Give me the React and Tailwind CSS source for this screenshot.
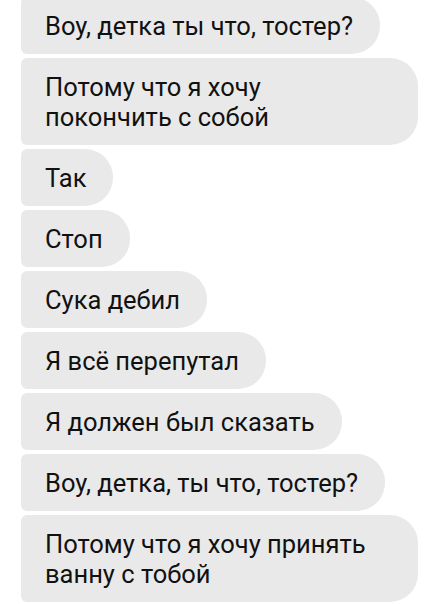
import React from 'react';

const messages = [
  { lines: ['Воу, детка ты что, тостер?'] },
  { lines: ['Потому что я хочу', 'покончить с собой'], wide: true },
  { lines: ['Так'] },
  { lines: ['Стоп'] },
  { lines: ['Сука дебил'] },
  { lines: ['Я всё перепутал'] },
  { lines: ['Я должен был сказать'] },
  { lines: ['Воу, детка, ты что, тостер?'] },
  { lines: ['Потому что я хочу принять', 'ванну с тобой'], wide: true },
];

const App = () => {
  return (
    <div
      className="w-[440px] h-[604px] overflow-hidden bg-white"
      style={{ fontFamily: 'Roboto, "Noto Sans", sans-serif' }}
    >
      {/* Chat bubbles */}
      <div className="flex flex-col items-start gap-[4px] pl-[21px] -mt-[3px]">
        {messages.map((msg, i) => (
          <div
            key={i}
            className={`bg-[#e9e9e9] text-[#111111] text-[25.5px] leading-[30px] pl-[24px] pr-[27px] pt-[14px] pb-[13px] rounded-l-[6px] rounded-r-[28px] ${
              msg.wide ? 'w-[397px]' : ''
            }`}
          >
            {msg.lines.map((line, j) => (
              <div key={j} className="whitespace-nowrap">
                {line}
              </div>
            ))}
          </div>
        ))}
      </div>
    </div>
  );
};

export default App;
